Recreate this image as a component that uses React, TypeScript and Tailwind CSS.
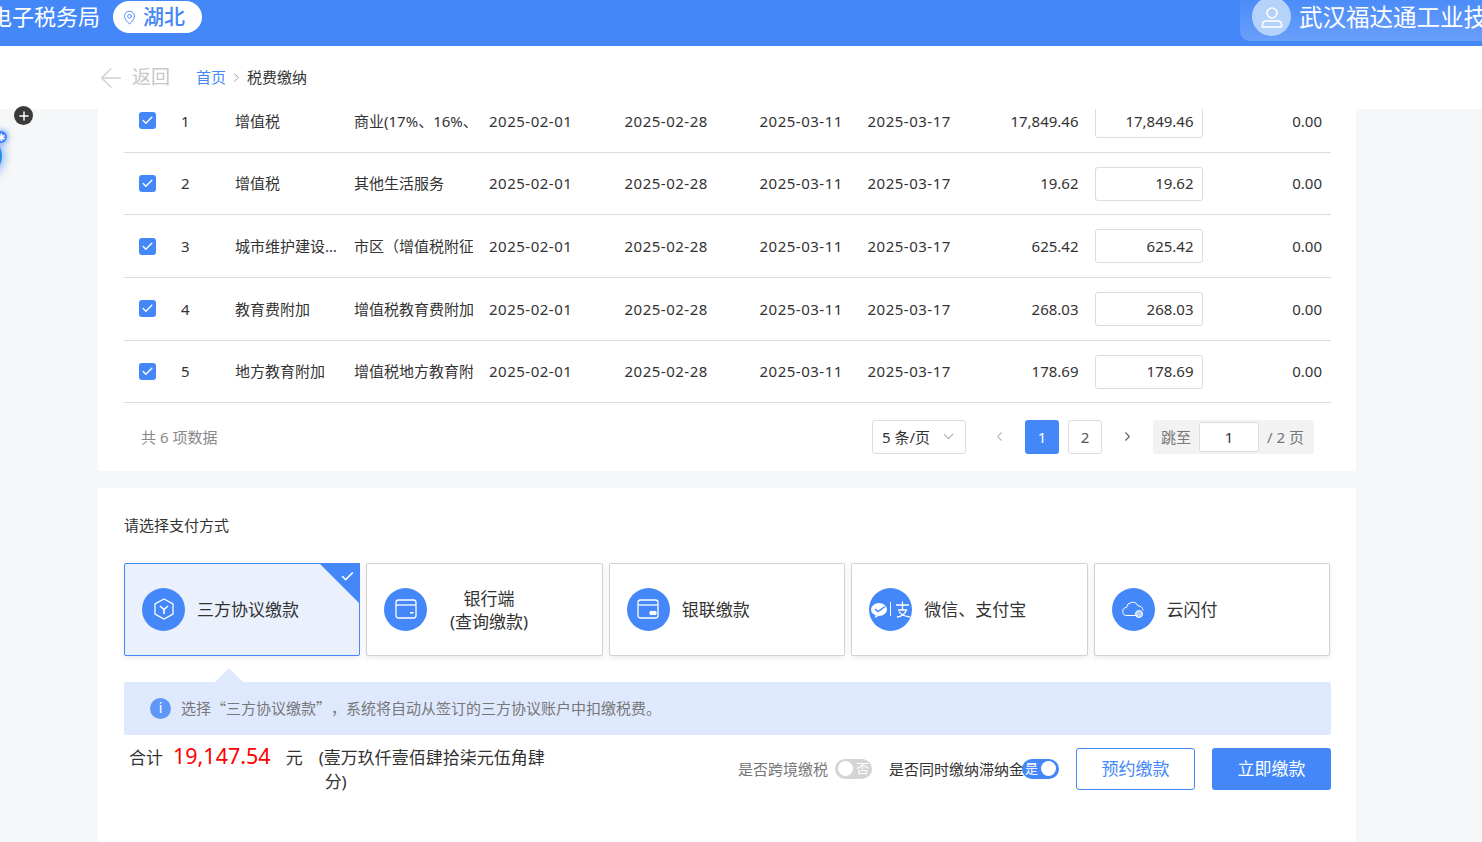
import { ArrowLeft, ChevronDown, ChevronLeft, ChevronRight, MapPin, Plus, Check } from "lucide-react";
import type { ReactNode } from "react";

const FONT = "font-['Noto_Sans','Noto_Sans_CJK_SC',sans-serif]";

const rows = [
  { no: 1, name: "增值税", item: "商业(17%、16%、13%)", amount: "17,849.46" },
  { no: 2, name: "增值税", item: "其他生活服务", amount: "19.62" },
  { no: 3, name: "城市维护建设税", item: "市区（增值税附征）", amount: "625.42" },
  { no: 4, name: "教育费附加", item: "增值税教育费附加", amount: "268.03" },
  { no: 5, name: "地方教育附加", item: "增值税地方教育附加", amount: "178.69" },
];

function Row({ no, name, item, amount }: (typeof rows)[number]) {
  return (
    <div className="grid h-[62.7px] grid-cols-[57px_54px_119px_135px_135.5px_135px_108px_227px_108px_1fr] items-center border-b border-[#dcdcdc] text-[15px] text-[#333]">
      <div className="pl-[15px]">
        <div className="flex h-[17px] w-[17px] items-center justify-center rounded-[3px] bg-[#4487f8]">
          <Check className="h-[13px] w-[13px] text-white" strokeWidth={2.5} />
        </div>
      </div>
      <div>{no}</div>
      <div className="w-[102px] truncate">{name}</div>
      <div className="w-[119px] overflow-hidden whitespace-nowrap">{item}</div>
      <div className="tracking-[0.5px]">2025-02-01</div>
      <div className="tracking-[0.5px]">2025-02-28</div>
      <div className="tracking-[0.5px]">2025-03-11</div>
      <div className="flex justify-between whitespace-nowrap pr-4">
        <span className="tracking-[0.5px]">2025-03-17</span>
        <span>{amount}</span>
      </div>
      <div className="flex h-[34px] items-center justify-end rounded-[3px] border border-[#dcdcdc] pr-2">{amount}</div>
      <div className="pr-[9px] text-right">0.00</div>
    </div>
  );
}

function IconCircle({ children }: { children: ReactNode }) {
  return (
    <div className="flex h-[43px] w-[43px] shrink-0 items-center justify-center rounded-full bg-[#4487f8] text-white">
      {children}
    </div>
  );
}

function HexIcon() {
  return (
    <svg width="24" height="24" viewBox="0 0 24 24" fill="none" stroke="currentColor" strokeWidth="1.3">
      <path d="M12 2l9 5v10l-9 5-9-5V7z" />
      <path d="M8 9l4 3.5L16 9M12 12.5V17" strokeWidth="1.6" />
    </svg>
  );
}

function CardIcon({ union }: { union?: boolean }) {
  return (
    <svg width="24" height="24" viewBox="0 0 24 24" fill="none" stroke="currentColor" strokeWidth="1.3">
      <rect x="2" y="3" width="20" height="18" rx="2.5" />
      <path d="M2 8h20" />
      {union ? (
        <>
          <circle cx="15.5" cy="16" r="1.6" fill="currentColor" />
          <circle cx="18.5" cy="16" r="1.6" fill="currentColor" />
        </>
      ) : (
        <rect x="16" y="15" width="3.5" height="1.6" fill="currentColor" stroke="none" />
      )}
    </svg>
  );
}

function WechatAliIcon() {
  return (
    <svg width="42" height="24" viewBox="0 0 42 24" fill="none">
      <ellipse cx="9" cy="12.5" rx="8" ry="6.5" fill="currentColor" />
      <path d="M5.5 18l-.5 3 3.5-2z" fill="currentColor" />
      <path d="M5 12l3 2.5 7-5" stroke="#4487f8" strokeWidth="1.4" />
      <path d="M20.5 5v14" stroke="currentColor" strokeWidth="1" />
      <path d="M26 8h13M32.500 4.500V13M28 13h8.500c-1.500 4-5 6.500-9.500 7M29 14.500c2 3 6 5 11 5.500" stroke="currentColor" strokeWidth="1.3" />
    </svg>
  );
}

function CloudIcon() {
  return (
    <svg width="24" height="24" viewBox="0 0 24 24" fill="none" stroke="currentColor" strokeWidth="1">
      <path d="M16 18.500H6a4 4 0 0 1-.5-8 6 6 0 0 1 11.500-1.500 4.500 4.500 0 0 1 5 4.500" />
      <circle cx="18" cy="17" r="3.500" fill="currentColor" fillOpacity="0.6" />
    </svg>
  );
}

const methods: { label: ReactNode; icon: ReactNode; center?: boolean }[] = [
  { label: "三方协议缴款", icon: <HexIcon /> },
  { label: <>银行端<br />(查询缴款)</>, icon: <CardIcon />, center: true },
  { label: "银联缴款", icon: <CardIcon union /> },
  { label: "微信、支付宝", icon: <WechatAliIcon /> },
  { label: "云闪付", icon: <CloudIcon /> },
];

function Toggle({ on, text }: { on?: boolean; text: string }) {
  return (
    <div className={`flex h-5 w-[37px] items-center justify-between rounded-full px-[3px] text-[13px] leading-none text-white ${on ? "bg-[#4487f8]" : "flex-row-reverse bg-[#d4d4d4]"}`}>
      <span>{text}</span>
      <span className="h-[15px] w-[15px] rounded-full bg-white" />
    </div>
  );
}

export default function App() {
  return (
    <div className={`${FONT} relative flex h-[842px] flex-col overflow-hidden bg-white`}>
      {/* 顶栏 */}
      <header className="flex h-[46px] shrink-0 items-start overflow-hidden bg-[#4487f8] text-white">
        <div className="flex h-[34px] items-center">
          <span className="-ml-[10px] -mt-[2px] whitespace-nowrap text-[22px]">电子税务局</span>
          <div className="ml-[13px] flex h-8 w-[89px] items-center gap-[6px] rounded-full bg-white pl-[9px] text-[#4487f8]">
            <MapPin className="h-[15px] w-[15px]" strokeWidth={1.5} />
            <span className="text-[21px] font-medium">湖北</span>
          </div>
        </div>
        <div className="ml-auto flex h-[41px] w-[242px] shrink-0 items-start gap-2 overflow-hidden rounded-bl-[10px] bg-gradient-to-b from-[#4b8cf8] to-[#6a9ffa] pl-3">
          <div className="-mt-[3px] flex h-[39px] w-[39px] shrink-0 items-center justify-center rounded-full bg-[#b5d2fb]">
            <svg width="26" height="26" viewBox="0 0 26 26" fill="none" stroke="white" strokeWidth="1.6">
              <circle cx="13" cy="9" r="5" />
              <path d="M3.500 23v-2.500c0-2 1.500-3.500 3.500-3.500h12c2 0 3.500 1.500 3.500 3.500V23z" />
            </svg>
          </div>
          <span className="whitespace-nowrap text-[23.500px] leading-[34px]">武汉福达通工业技术有限公司</span>
        </div>
      </header>

      {/* 返回 + 面包屑 */}
      <div className="flex h-[63px] shrink-0 items-center pl-[95px]">
        <ArrowLeft className="h-8 w-8 text-[#d0d0d0]" strokeWidth={1} />
        <span className="ml-[5px] text-[19px] text-[#c8c8c8]">返回</span>
        <span className="ml-[26px] text-[15px] text-[#4487f8]">首页</span>
        <ChevronRight className="mx-[3px] h-[15px] w-[15px] text-[#999]" strokeWidth={1.5} />
        <span className="text-[15px] text-[#333]">税费缴纳</span>
      </div>

      <div className="min-h-0 flex-1 overflow-hidden bg-[#f6f7f9] pl-[98px]">
        <div className="-mt-[19px] w-[1258px]">
          {/* 税费明细 */}
          <section className="bg-white pl-[26px] pr-[25px]">
            {rows.map((r) => (
              <Row key={r.no} {...r} />
            ))}
            <div className="flex h-[67.500px] items-start pt-[16.500px] text-[15px]">
              <span className="ml-[17px] leading-[34px] text-[#888]">共 6 项数据</span>
              <div className="ml-auto flex h-[34px] w-[94px] items-center justify-between rounded-[3px] border border-[#dcdcdc] pl-[9px] pr-2 text-[#333]">
                <span>5 条/页</span>
                <ChevronDown className="h-[17px] w-[17px] text-[#aaa]" strokeWidth={1.5} />
              </div>
              <div className="ml-[26px] flex h-[34px] w-[15px] items-center justify-center">
                <ChevronLeft className="h-[15px] w-[15px] text-[#bbb]" strokeWidth={1.8} />
              </div>
              <div className="ml-[18px] flex h-[34px] w-[34px] items-center justify-center rounded-[3px] bg-[#4487f8] text-white">1</div>
              <div className="ml-[9px] flex h-[34px] w-[34px] items-center justify-center rounded-[3px] border border-[#dcdcdc] text-[#555]">2</div>
              <div className="ml-[18px] flex h-[34px] w-[15px] items-center justify-center">
                <ChevronRight className="h-[15px] w-[15px] text-[#666]" strokeWidth={1.8} />
              </div>
              <div className="ml-[18px] mr-[17px] flex h-[34px] w-[161px] items-center rounded-[3px] bg-[#f2f2f2] pl-2 text-[#777]">
                <span>跳至</span>
                <div className="ml-2 flex h-[30px] w-[60px] items-center justify-center rounded-[3px] border border-[#dcdcdc] bg-white text-[#333]">1</div>
                <span className="ml-2">/ 2 页</span>
              </div>
            </div>
          </section>

          {/* 支付方式 */}
          <section className="mt-[17px] h-[400px] bg-white pl-[26px] pr-[25px] pt-[26px]">
            <div className="text-[15px] leading-[22px] text-[#333]">请选择支付方式</div>
            <div className="mr-px mt-[27px] grid grid-cols-5 gap-[6px]">
              {methods.map((m, i) => (
                <div
                  key={i}
                  className={`relative flex h-[93px] items-center gap-[12px] rounded-[2px] border pl-[17px] text-[17px] leading-[23px] text-[#333] shadow-[0_2px_5px_rgba(120,120,160,0.15)] ${i === 0 ? "border-[#4487f8] bg-[#ebf1fc]" : "border-[#d2d2d2] bg-white"}`}
                >
                  <IconCircle>{m.icon}</IconCircle>
                  <span className={`pt-px ${m.center ? "flex-1 pr-[63px] text-center" : ""}`}>{m.label}</span>
                  {i === 0 && (
                    <>
                      <div className="absolute -right-px -top-px h-0 w-0 border-l-[41px] border-t-[41px] border-l-transparent border-t-[#4487f8]" />
                      <Check className="absolute right-[4px] top-[5px] h-[15px] w-[15px] text-white" strokeWidth={2.5} />
                    </>
                  )}
                </div>
              ))}
            </div>

            <div className="relative mt-[26px] flex h-[53px] items-center gap-[10px] rounded-[2px] bg-[#dfe9fe] pl-[26px] text-[15px] text-[#777]">
              <div className="absolute left-[91px] -top-[14px] h-0 w-0 border-x-[14px] border-b-[14px] border-x-transparent border-b-[#dfe9fe]" />
              <div className="flex h-[21px] w-[21px] items-center justify-center rounded-full bg-[#5f97f8] text-[14px] leading-none text-white">i</div>
              <span className="font-['Noto_Sans_CJK_SC',sans-serif] [text-spacing-trim:space-all]">选择“三方协议缴款”，系统将自动从签订的三方协议账户中扣缴税费。</span>
            </div>

            <div className="mt-[11px] flex items-start">
              <div className="flex w-[423px] shrink-0 items-start pl-[5px] text-[17px] leading-[24px] text-[#333]">
                <span className="whitespace-nowrap">合计</span>
                <span className="ml-[10px] -mt-[3px] text-[21.500px] leading-[25px] text-[#ff0000]">19,147.54</span>
                <span className="ml-[15px]">元</span>
                <span className="ml-4 w-[236px] pl-[6px] -indent-[6px]">(壹万玖仟壹佰肆拾柒元伍角肆分)</span>
              </div>
              <div className="mt-[2px] flex h-[42px] flex-1 items-center text-[15px]">
                <span className="ml-[191px] whitespace-nowrap text-[#777]">是否跨境缴税</span>
                <span className="ml-[7px]"><Toggle text="否" /></span>
                <span className="ml-[17px] whitespace-nowrap text-[#333]">是否同时缴纳滞纳金</span>
                <span className="-ml-[2px]"><Toggle on text="是" /></span>
                <div className="ml-[17px] flex h-[42px] w-[119px] items-center justify-center rounded-[3px] border border-[#4487f8] text-[17px] text-[#4487f8]">预约缴款</div>
                <div className="ml-[17px] flex h-[42px] w-[119px] items-center justify-center rounded-[3px] bg-[#4487f8] text-[17px] text-white">立即缴款</div>
              </div>
            </div>
          </section>
        </div>
      </div>

      {/* 左侧悬浮按钮 */}
      <div className="absolute left-[14px] top-[106px] flex h-[19px] w-[19px] items-center justify-center rounded-full bg-[#3a3a3a]">
        <Plus className="h-[14px] w-[14px] text-white" strokeWidth={2.5} />
      </div>
      <div className="absolute -left-[38px] top-[136px] h-10 w-10 rounded-full bg-[#1e90f5] shadow-[0_0_8px_3px_rgba(68,135,248,0.5)]" />
      <div className="absolute -left-[5px] top-[131px] flex h-[12px] w-[12px] items-center justify-center rounded-full bg-[#4487f8] text-[10px] leading-none text-white shadow-[0_0_5px_2px_rgba(68,135,248,0.5)]">✱</div>
    </div>
  );
}
